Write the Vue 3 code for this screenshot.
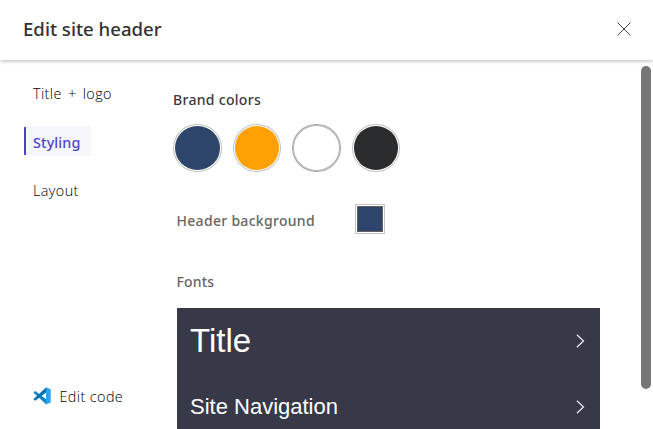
<script setup>
const tabs = [
  { label: 'Title + logo', name: 'title' },
  { label: 'Styling', name: 'styling', active: true },
  { label: 'Layout', name: 'layout' },
]
const colors = ['#2d456b', '#ffa005', '#ffffff', '#2b2c2e']
const fonts = [
  { label: 'Title', name: 'site-title' },
  { label: 'Site Navigation', name: 'site-nav' },
]
</script>

<template>
  <div class="panel">
    <header class="top">
      <h1><span>Edit site header</span></h1>
      <button class="close" aria-label="Close">
        <svg width="14" height="14" viewBox="0 0 14 14"><path d="M.5.5l13 13M13.5.5l-13 13" fill="none" stroke="#444" stroke-width="1" /></svg>
      </button>
    </header>
    <div class="body">
      <nav>
        <div class="tabs">
          <button v-for="t in tabs" :key="t.name" class="tab" :class="[t.name, { active: t.active }]"><span>{{ t.label }}</span></button>
        </div>
        <button class="code">
          <svg width="18" height="18" viewBox="0 0 18 18">
            <path d="M.3 5.4 2.2 4 13.2 12.3v4.9z" fill="#0a86cc" />
            <path d="M.3 12.3 13 .6v5L2.2 13.8z" fill="#0b6fb3" />
            <path d="M13 .3 17.7 2.3v13.1L13 17.4 11.8 16.3l1.2-.8V2.3l-1.2-.8z" fill="#29a5ed" />
          </svg>
          <span>Edit code</span>
        </button>
      </nav>
      <main>
        <h2 class="brand"><span>Brand colors</span></h2>
        <div class="swatches">
          <span v-for="c in colors" :key="c" class="swatch" :class="{ light: c === '#ffffff' }"><i :style="{ background: c }"></i></span>
        </div>
        <div class="background">
          <span class="label">Header background</span>
          <span class="picker"><i></i></span>
        </div>
        <h2 class="fonts"><span>Fonts</span></h2>
        <div class="preview">
          <div v-for="f in fonts" :key="f.name" class="row" :class="f.name">
            <span>{{ f.label }}</span>
            <svg width="10" height="14" viewBox="0 0 10 14"><path d="M.9.8 7.5 7 .9 13.2" fill="none" stroke="#eeeeef" stroke-width="1.2" /></svg>
          </div>
        </div>
      </main>
      <div class="scroll"></div>
    </div>
  </div>
</template>

<style>
body { margin: 0; overflow: hidden; background: #fff; }
</style>

<style scoped>
.panel { width: 653px; height: 429px; overflow: hidden; display: flex; flex-direction: column; background: #fff; font-family: "Open Sans", "Noto Sans", sans-serif; color: #323130; }
button { border: 0; background: none; padding: 0; font: inherit; color: inherit; text-align: left; white-space: nowrap; }
h1, h2 { margin: 0; white-space: nowrap; }
h1, h2, .label { font-family: "Noto Sans", "Open Sans", sans-serif; }
.top { flex: none; box-sizing: border-box; height: 60px; padding: 0 21px 2px 23px; display: flex; align-items: center; justify-content: space-between; box-shadow: 0 1px 4px rgba(0, 0, 0, .28); }
h1 { font-size: 18.6px; font-weight: 500; line-height: 26px; letter-spacing: 0; color: #323130; }
.close { width: 14px; height: 14px; margin: 0 1px 0 0; }
svg { display: block; flex: none; }
.body { flex: 1; min-height: 0; display: flex; }
nav { flex: none; width: 149px; padding-left: 24px; display: flex; flex-direction: column; justify-content: space-between; box-sizing: content-box; }
.tabs { display: flex; flex-direction: column; align-items: flex-start; gap: 18px; padding-top: 18px; }
.tab { height: 30px; line-height: 32px; padding: 0 10px 0 9px; font-size: 14.4px; font-weight: 300; color: #000; }
.tab.title { letter-spacing: .4px; word-spacing: 2px; }
.tab.layout { letter-spacing: .4px; line-height: 34px; }
.tab.active { width: 67px; box-sizing: border-box; font-family: "Noto Sans", sans-serif; color: #4f44ca; font-weight: 500; line-height: 34px; letter-spacing: .1px; background: linear-gradient(#4a40c6, #4a40c6) 0 50% / 2px 28px no-repeat #f5f6fc; border-radius: 2px; }
.code { display: flex; align-items: center; gap: 8.5px; margin: 0 0 20px 9px; height: 26px; font-size: 14.4px; font-weight: 300; letter-spacing: .4px; color: #000; }
main { width: 430px; padding-top: 29px; flex: none; }
h2, .label { font-size: 14px; font-weight: 500; line-height: 22px; }
.brand { color: #3a3938; letter-spacing: .3px; }
.swatches { display: flex; gap: 11px; margin-top: 13px; }
.swatch { box-sizing: border-box; width: 48.5px; height: 48px; padding: 1px; border: 1px solid #c2c2c2; border-radius: 50%; }
.swatch i { display: block; width: 100%; height: 100%; border-radius: 50%; }
.swatch.light { border-color: #a8a8a8; box-shadow: inset 0 0 0 1px #b4b4b4; padding: 2px; }
.background { display: flex; align-items: center; width: 212px; justify-content: space-between; margin-top: 32px; padding-left: 4px; box-sizing: border-box; }
.label, .fonts { color: #666564; }
.label { padding-top: 3px; letter-spacing: .3px; margin-left: -.5px; }
.picker { box-sizing: border-box; width: 30px; height: 30px; padding: 1px; border: 1px solid #c4c4c4; }
.picker i { display: block; box-sizing: border-box; width: 26px; height: 26px; border: 1px solid #625f5d; background: #2d456b; }
.fonts { margin: 37px 0 0 3.5px; letter-spacing: .15px; }
.preview { width: 423px; height: 130px; margin: 15px 0 0 4px; background: #373948; color: #fff; font-family: "Liberation Sans", Arial, sans-serif; }
.row { height: 66px; box-sizing: border-box; padding: 0 14px 0 13px; display: flex; align-items: center; justify-content: space-between; }
.site-title { font-size: 33px; }
.site-nav { font-size: 22px; }
.scroll { width: 10px; height: 323px; border-radius: 5px; background: #767676; margin: 6px 2px 0 auto; flex: none; }
</style>
